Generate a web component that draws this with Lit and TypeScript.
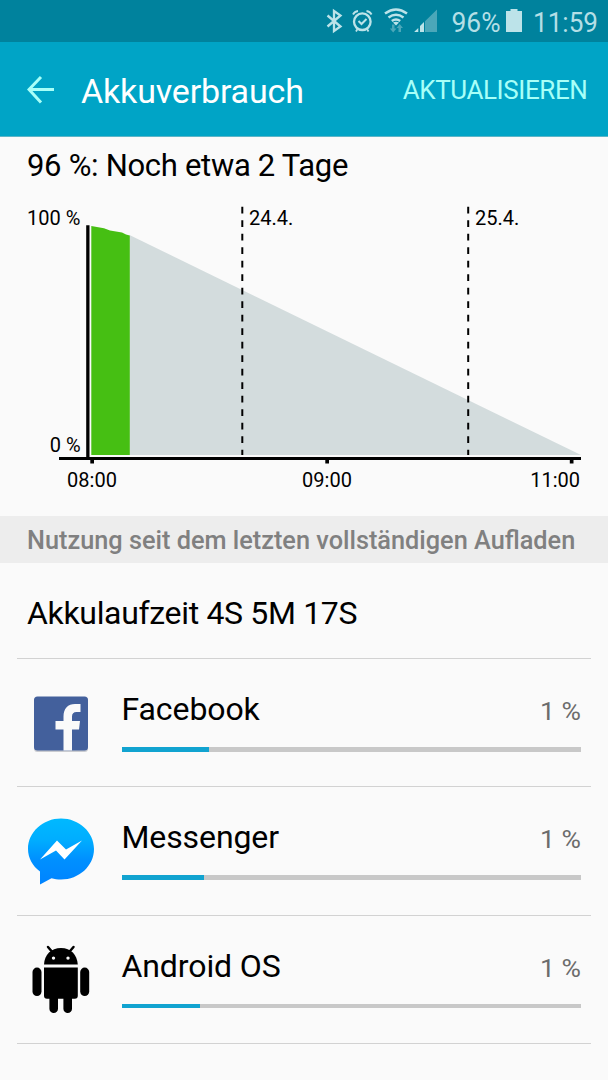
import { LitElement, html, css, svg } from "lit";
import { customElement, property } from "lit/decorators.js";

const facebook = svg`
  <rect x="7" y="7.500" width="54" height="54.500" rx="3.5" fill="#c9cbd0"/>
  <rect x="7" y="6.500" width="54" height="54" rx="3.5" fill="#43609c"/>
  <path fill="#fafafa" d="M36.500 60.500V39.500H28.500V31H36.500V26.500C36.500 18.500 41 14 48 14H53.500V22H49.500C46.500 22 45 23.500 45 26.500V31H53L52 39.500H45V60.500Z"/>`;

const messenger = svg`
  <defs><linearGradient id="m" x1="0" y1="0" x2="0" y2="1">
    <stop offset="0" stop-color="#00b9ff"/><stop offset=".33" stop-color="#00adff"/>
    <stop offset=".62" stop-color="#0090ff"/><stop offset="1" stop-color="#0083ff"/>
  </linearGradient></defs>
  <path fill="url(#m)" d="M34 0.5C52 0.5 67 14 67 31C67 48 52 61.500 34 61.500C30.500 61.500 27.500 61 24.500 60.200L13 66.500V53.500C5.500 48 1 40 1 31C1 14 16 .5 34 .5Z"/>
  <path fill="#fff" d="M13 41.500L30 22.500L39 31.500L55 22.500L37.500 41.500L29 32.500Z"/>`;

const android = svg`
  <g transform="translate(0 1.300)">
    <g fill="#000">
      <path d="M17 17.300C17.500 7.500 24 0.800 34 0.800S50 7.500 50.800 17.300Z"/>
      <path d="M21 -.3L25.500 5M46.500 -.3L42 5" stroke="#000" stroke-width="2.500" stroke-linecap="round"/>
      <rect x="5.500" y="20.300" width="9" height="28.500" rx="4.500"/>
      <rect x="53.200" y="20.300" width="9" height="28.500" rx="4.500"/>
      <path d="M17 20.300H50.800V48.500Q50.800 51.500 47.800 51.500H45V61.500A4.300 4.300 0 0 1 36.400 61.500V51.500H31V61.500A4.300 4.300 0 0 1 22.400 61.500V51.500H20Q17 51.500 17 48.500Z"/>
    </g>
    <circle cx="26.500" cy="10.800" r="1.700" fill="#fafafa"/><circle cx="41" cy="10.800" r="1.700" fill="#fafafa"/>
  </g>`;

const apps = [
  { name: "Facebook", share: "1 %", fill: 19.1, icon: facebook },
  { name: "Messenger", share: "1 %", fill: 18, icon: messenger },
  { name: "Android OS", share: "1 %", fill: 17, icon: android },
];

@customElement("usage-row")
class UsageRow extends LitElement {
  @property({ attribute: false }) app!: (typeof apps)[number];

  static styles = css`
    :host { display: flex; height: 127.300px; margin: 0 17px; border-bottom: 1px solid #d2d2d2; }
    .icon { width: 68px; height: 68px; margin: 30.500px 27px 0 10px; overflow: visible; flex: none; }
    .info { flex: 1; margin-right: 10px; margin-left: -.5px; padding-top: 30px; }
    .line { display: flex; justify-content: space-between; height: 58px; line-height: 41px; white-space: nowrap; }
    .name { font-size: 32px; letter-spacing: -.1px; color: #000; }
    .share { font-size: 26.500px; color: #6c6c6c; line-height: 44px; }
    .track { height: 4.500px; background: #c8c8c8; }
    .fill { height: 100%; background: #11a3d0; }
  `;

  render() {
    return html`
      <svg class="icon" viewBox="0 0 68 68">${this.app.icon}</svg>
      <div class="info">
        <div class="line"><span class="name">${this.app.name}</span><span class="share">${this.app.share}</span></div>
        <div class="track"><div class="fill" style="width:${this.app.fill}%"></div></div>
      </div>`;
  }
}

@customElement("app-root")
class AppRoot extends LitElement {
  static styles = css`
    :host { display: block; height: 1080px; overflow: hidden; background: #fafafa; font-family: Roboto, sans-serif; color: #000; white-space: nowrap; }
    svg { display: block; }
    .status { height: 42px; background: #00829d; }
    .bar { height: 95px; background: #00a4c6; display: flex; align-items: center; border-bottom: 1px solid #5cb5c7; box-sizing: border-box; padding: 2px 21px 0 27px; }
    .title { font-size: 34px; letter-spacing: -.17px; color: #fff; margin-left: 27px; padding-top: 1px; flex: 1; }
    .action { font-size: 26px; letter-spacing: -.42px; color: #a8fff8; margin-right: -.4px; }
    .estimate { height: 58px; line-height: 58px; padding-left: 27px; font-size: 31px; letter-spacing: -.3px; }
    .chart text { font-size: 20px; }
    .section { height: 47px; line-height: 50px; background: #ededed; color: #808080; font-size: 25.300px; font-weight: 500; padding-left: 27px; }
    .runtime { height: 95px; line-height: 100px; margin: 0 17px; padding-left: 10px; font-size: 32px; letter-spacing: -.33px; border-bottom: 1px solid #d2d2d2; }
  `;

  render() {
    return html`
      <svg class="status" width="608" height="42" viewBox="0 0 608 42">
        <g fill="none" stroke="#bce3e9" stroke-width="2.300">
          <path d="M327.500 15.500L340.500 26.500L334 31V11L340.500 15.500L327.500 26.500"/>
          <circle cx="362.300" cy="21.700" r="8.300"/>
          <path d="M358.500 21L361.500 24L366.500 19" stroke-width="2"/>
          <path d="M353 14.500Q354.500 11.500 358 11M371.600 14.500Q370 11.500 366.500 11M357.500 29L356 31.500M367 29L368.500 31.500" stroke-width="1.800"/>
          <path d="M385 13.500Q396 5.500 407 13.500M388.500 17.500Q396 12 403.500 17.500M391.800 21Q396 18 400.200 21" stroke-width="2.500"/>
        </g>
        <path fill="#bce3e9" d="M393 22.500Q396 20.800 399 22.500L396 25.500ZM414.500 32V31.500L418.300 28V32ZM420 32V26L424 22V32ZM506 11H510.500V9H517.500V11H522V32H506Z"/>
        <path fill="#4ba7b9" d="M425 21.300L437 9.500V32H425ZM392 24.500H394.500V28.500H396.500L393.200 32.500L389.800 28.500H392ZM398.500 32V28H396.500L399.700 24L403 28H401V32Z"/>
        <g fill="#b4dfe6" font-size="27.500">
          <text x="451.500" y="31.500" textLength="49" lengthAdjust="spacingAndGlyphs">96%</text>
          <text x="533" y="31.500" textLength="65" lengthAdjust="spacingAndGlyphs">11:59</text>
        </g>
      </svg>
      <div class="bar">
        <svg width="27" height="32" viewBox="0 0 27 32"><path d="M14 3L2 15.500L14 28.500M2 15.500H27" fill="none" stroke="#a8fff8" stroke-width="3"/></svg>
        <span class="title">Akkuverbrauch</span>
        <span class="action">AKTUALISIEREN</span>
      </div>
      <div class="estimate">96 %: Noch etwa 2 Tage</div>
      <svg class="chart" width="608" height="321" viewBox="0 195 608 321">
        <path fill="#d3dcdd" d="M129.500 235L581 455H129.500Z"/>
        <path fill="#46bf13" d="M91.300 226L104 228.300L110 230.500L122 232.500L126 234.500L129.800 235.500V455H91.300Z"/>
        <path fill="none" stroke="#000" stroke-width="2" stroke-dasharray="6.800 6.700" d="M242.300 206.800V455M468.200 206.800V455"/>
        <path d="M86.200 225.300H89.500V457H581V460H573.500V463.500H569.800V460H329V463.500H325.300V460H94V463.500H90.300V460H59V457H86.200Z"/>
        <text x="27" y="225.400">100 %</text><text x="49.800" y="451.700">0 %</text>
        <text x="249" y="225.400">24.4.</text><text x="475" y="225.400">25.4.</text>
        <text x="92" y="487.400" text-anchor="middle">08:00</text>
        <text x="327" y="487.400" text-anchor="middle">09:00</text>
        <text x="555.200" y="487.400" text-anchor="middle">11:00</text>
      </svg>
      <div class="section">Nutzung seit dem letzten vollständigen Aufladen</div>
      <div class="runtime">Akkulaufzeit 4S 5M 17S</div>
      ${apps.map((a) => html`<usage-row .app=${a}></usage-row>`)}`;
  }
}
